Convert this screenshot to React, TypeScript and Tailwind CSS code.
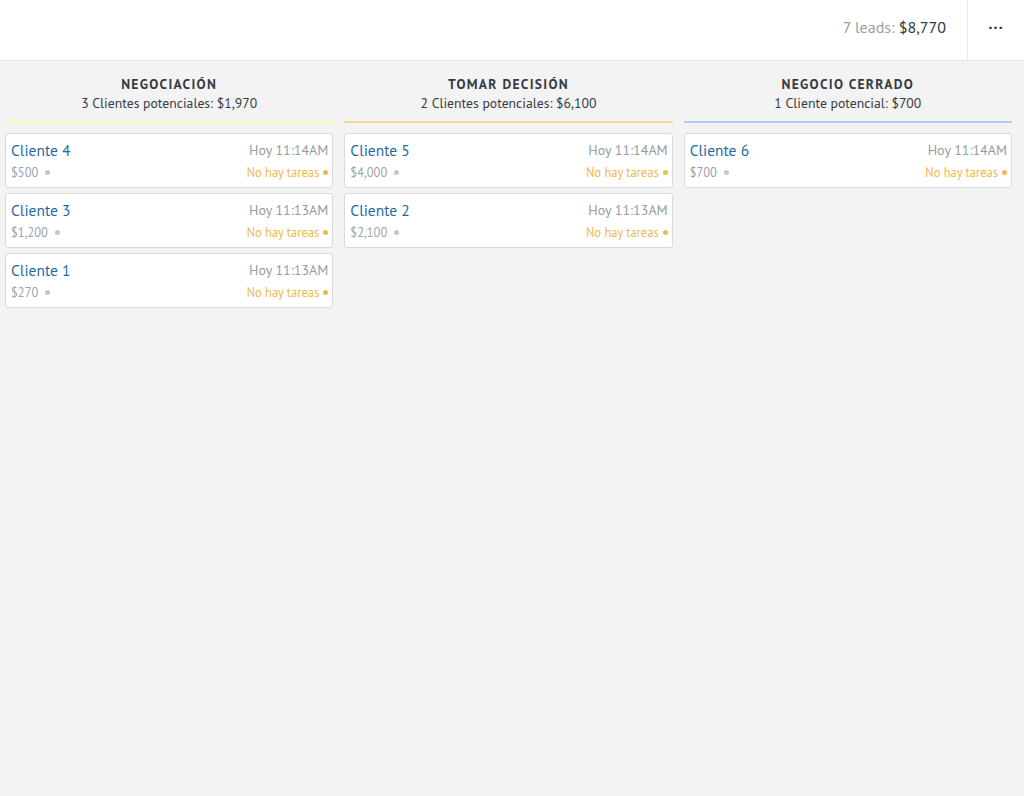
import React from 'react';

interface Lead {
  name: string;
  time: string;
  price: string;
}

interface Stage {
  title: string;
  summary: string;
  line: string;
  leads: Lead[];
}

const stages: Stage[] = [
  {
    title: 'NEGOCIACIÓN',
    summary: '3 Clientes potenciales: $1,970',
    line: 'bg-[#fdfbb0]',
    leads: [
      { name: 'Cliente 4', time: 'Hoy 11:14AM', price: '$500' },
      { name: 'Cliente 3', time: 'Hoy 11:13AM', price: '$1,200' },
      { name: 'Cliente 1', time: 'Hoy 11:13AM', price: '$270' },
    ],
  },
  {
    title: 'TOMAR DECISIÓN',
    summary: '2 Clientes potenciales: $6,100',
    line: 'bg-[#fbd68e]',
    leads: [
      { name: 'Cliente 5', time: 'Hoy 11:14AM', price: '$4,000' },
      { name: 'Cliente 2', time: 'Hoy 11:13AM', price: '$2,100' },
    ],
  },
  {
    title: 'NEGOCIO CERRADO',
    summary: '1 Cliente potencial: $700',
    line: 'bg-[#a9cdf4]',
    leads: [{ name: 'Cliente 6', time: 'Hoy 11:14AM', price: '$700' }],
  },
];

const LeadCard: React.FC<{ lead: Lead }> = ({ lead }) => (
  <div className="h-[55px] bg-white border border-[#d8dadb] rounded-[3px] pl-[5px] pr-[4px] pt-[6px]">
    <div className="flex items-center justify-between">
      <span className="text-[15.5px] leading-[20px] text-[#1e6aa5]">{lead.name}</span>
      <span className="text-[14px] leading-[20px] text-[#979c9f]">{lead.time}</span>
    </div>
    <div className="flex items-center justify-between mt-[3px]">
      <span className="flex items-center text-[12.5px] leading-[18px] text-[#9ea3a6]">
        {lead.price}
        <span className="ml-[7px] w-[5px] h-[5px] rounded-full bg-[#c4c7c9]" />
      </span>
      <span className="flex items-center text-[12.5px] leading-[18px] text-[#eeba4c]">
        No hay tareas
        <span className="ml-[4px] w-[5px] h-[5px] rounded-full bg-[#eeba4c]" />
      </span>
    </div>
  </div>
);

export default function App() {
  return (
    <div
      className="min-h-[796px] bg-[#f3f3f3] text-[#2e3640]"
      style={{ fontFamily: '"PT Sans", Lato, "Liberation Sans", sans-serif' }}
    >
      <header className="h-[61px] bg-white border-b border-[#e6e8ea] flex justify-end">
        <div className="flex items-center pr-[21px] pb-[6px] text-[16px]">
          <span className="text-[#9a9fa3]">7 leads:&nbsp;</span>
          <span className="text-[#313942]">$8,770</span>
        </div>
        <div className="w-[57px] border-l border-[#e6e8ea] flex items-center justify-center">
          <span className="text-[16px] font-bold tracking-[1px] text-[#333] leading-none pb-[14px]">...</span>
        </div>
      </header>

      <main className="grid grid-cols-3 gap-[11px] px-[5px] pr-[12px]">
        {stages.map((stage) => (
          <section key={stage.title}>
            <div className="text-center pt-[14px]">
              <div className="text-[13.5px] font-bold tracking-[1.3px] leading-[18px] text-[#363b44]">
                {stage.title}
              </div>
              <div className="text-[13.7px] leading-[18px] mt-[1px] text-[#363b44]">{stage.summary}</div>
            </div>
            <div className={`h-[2px] mt-[9px] ${stage.line}`} />
            <div className="flex flex-col gap-[5px] mt-[10px]">
              {stage.leads.map((lead) => (
                <LeadCard key={lead.name} lead={lead} />
              ))}
            </div>
          </section>
        ))}
      </main>
    </div>
  );
}
